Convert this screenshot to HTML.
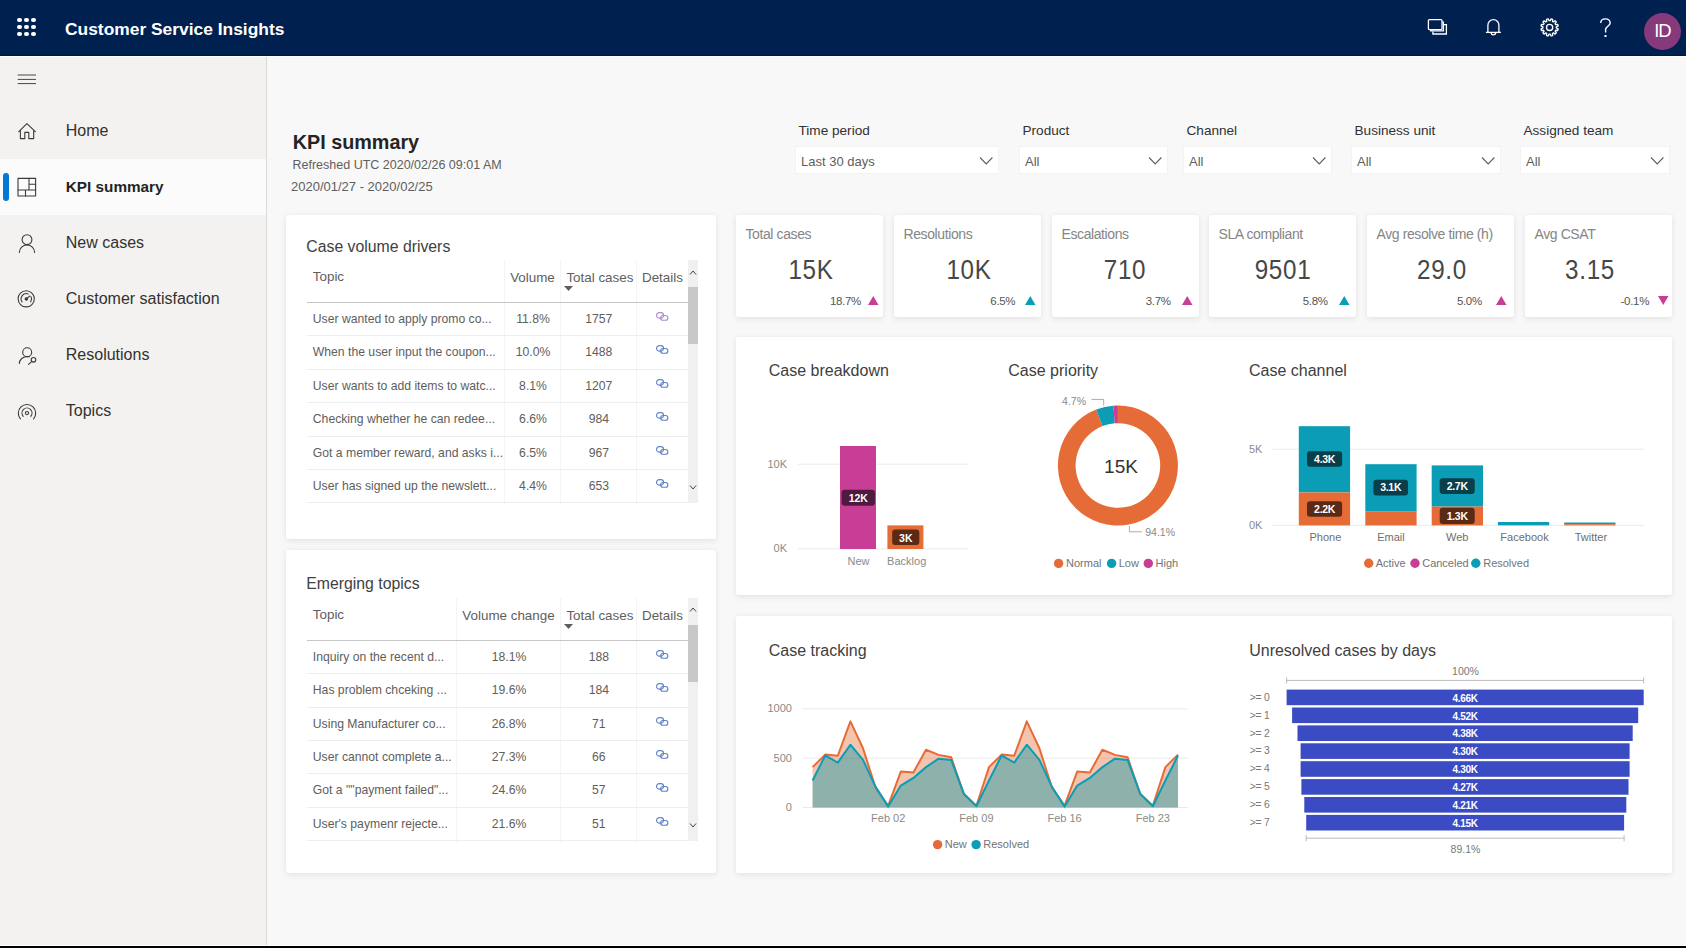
<!DOCTYPE html>
<html><head><meta charset="utf-8"><title>Customer Service Insights - KPI summary</title>
<style>
html,body{margin:0;padding:0;}
body{width:1686px;height:948px;position:relative;overflow:hidden;background:#f7f7f7;font-family:"Liberation Sans", sans-serif;}
.t{position:absolute;white-space:nowrap;line-height:1;}
</style></head><body>
<div style="position:absolute;left:0px;top:0px;width:1686px;height:56px;background:#002050"></div>
<div style="position:absolute;left:0px;top:55px;width:1686px;height:1px;background:#001545"></div>
<div style="position:absolute;left:0px;top:56px;width:1686px;height:1px;background:#ffffff"></div>
<div style="position:absolute;left:17.4px;top:17.8px;width:4.2px;height:4.2px;border-radius:50%;background:#fff"></div>
<div style="position:absolute;left:17.4px;top:24.8px;width:4.2px;height:4.2px;border-radius:50%;background:#fff"></div>
<div style="position:absolute;left:17.4px;top:31.8px;width:4.2px;height:4.2px;border-radius:50%;background:#fff"></div>
<div style="position:absolute;left:24.4px;top:17.8px;width:4.2px;height:4.2px;border-radius:50%;background:#fff"></div>
<div style="position:absolute;left:24.4px;top:24.8px;width:4.2px;height:4.2px;border-radius:50%;background:#fff"></div>
<div style="position:absolute;left:24.4px;top:31.8px;width:4.2px;height:4.2px;border-radius:50%;background:#fff"></div>
<div style="position:absolute;left:31.4px;top:17.8px;width:4.2px;height:4.2px;border-radius:50%;background:#fff"></div>
<div style="position:absolute;left:31.4px;top:24.8px;width:4.2px;height:4.2px;border-radius:50%;background:#fff"></div>
<div style="position:absolute;left:31.4px;top:31.8px;width:4.2px;height:4.2px;border-radius:50%;background:#fff"></div>
<div class="t" style="left:65.00px;top:20.76px;font-size:17.4px;font-weight:700;color:#ffffff;">Customer Service Insights</div>
<svg style="position:absolute;left:0;top:0" width="1686" height="56">
<g fill="none" stroke="#ffffff" stroke-width="1.3">
 <rect x="1428.4" y="19.6" width="13.6" height="10" rx="1"/>
 <path d="M1442.4 22.2 H1443.4 V30.9 H1430.7 V29.8"/>
 <path d="M1443.9 24.6 H1446.4 V34 H1432.9 V31.4"/>
 <path d="M1487.9 32.3 V25.2 A5.5 5.5 0 0 1 1498.9 25.2 V32.3"/>
 <path d="M1485.9 32.4 H1500.9"/>
 <path d="M1491.1 32.5 A2.3 2.3 0 0 0 1495.7 32.5"/>
 <circle cx="1549.6" cy="27.4" r="3.1"/>
 <path d="M1550.16 20.72 L1551.01 18.81 L1552.68 19.26 L1552.45 21.34 L1553.42 21.90 L1555.11 20.67 L1556.33 21.89 L1555.10 23.58 L1555.66 24.55 L1557.74 24.32 L1558.19 25.99 L1556.28 26.84 L1556.28 27.96 L1558.19 28.81 L1557.74 30.48 L1555.66 30.25 L1555.10 31.22 L1556.33 32.91 L1555.11 34.13 L1553.42 32.90 L1552.45 33.46 L1552.68 35.54 L1551.01 35.99 L1550.16 34.08 L1549.04 34.08 L1548.19 35.99 L1546.52 35.54 L1546.75 33.46 L1545.78 32.90 L1544.09 34.13 L1542.87 32.91 L1544.10 31.22 L1543.54 30.25 L1541.46 30.48 L1541.01 28.81 L1542.92 27.96 L1542.92 26.84 L1541.01 25.99 L1541.46 24.32 L1543.54 24.55 L1544.10 23.58 L1542.87 21.89 L1544.09 20.67 L1545.78 21.90 L1546.75 21.34 L1546.52 19.26 L1548.19 18.81 L1549.04 20.72 Z" stroke-linejoin="round"/>
</g>
</svg>
<svg style="position:absolute;left:0;top:0" width="1686" height="56"><path d="M1600.7 23 C1600.7 20.4 1602.8 18.9 1605.5 18.9 C1608.2 18.9 1610.2 20.7 1610.2 23.1 C1610.2 25.7 1605.6 26.4 1605.6 29.6 V32.5" fill="none" stroke="#ffffff" stroke-width="1.4"/><rect x="1604.5" y="35" width="2" height="2" fill="#fff"/></svg>
<div style="position:absolute;left:1643.8px;top:12.6px;width:37px;height:37px;border-radius:50%;background:#863a7b"></div>
<div class="t" style="left:1362.40px;width:600px;text-align:center;top:22.03px;font-size:18.5px;font-weight:400;color:#ffffff;letter-spacing:-1px;">ID</div>
<div style="position:absolute;left:0px;top:57px;width:266px;height:889px;background:#f3f2f1"></div>
<div style="position:absolute;left:266px;top:57px;width:1px;height:889px;background:#d8d8d8"></div>
<div style="position:absolute;left:0px;top:159px;width:266px;height:56px;background:#fbfbfb"></div>
<div style="position:absolute;left:3px;top:173px;width:6px;height:28px;background:#0078d4;border-radius:3px"></div>
<svg style="position:absolute;left:0;top:56px" width="266" height="400">
<g fill="none" stroke="#605e5c" stroke-width="1">
 <path d="M17.7 19 H36 M17.7 23.4 H36 M17.7 27.6 H36" stroke="#484644"/>
</g>
</svg>
<div class="t" style="left:65.80px;top:123.22px;font-size:16px;font-weight:400;color:#323130;">Home</div>
<div class="t" style="left:65.80px;top:179.30px;font-size:15.3px;font-weight:700;color:#252423;">KPI summary</div>
<div class="t" style="left:65.80px;top:235.22px;font-size:16px;font-weight:400;color:#323130;">New cases</div>
<div class="t" style="left:65.80px;top:291.22px;font-size:16px;font-weight:400;color:#323130;">Customer satisfaction</div>
<div class="t" style="left:65.80px;top:347.22px;font-size:16px;font-weight:400;color:#323130;">Resolutions</div>
<div class="t" style="left:65.80px;top:403.22px;font-size:16px;font-weight:400;color:#323130;">Topics</div>
<svg style="position:absolute;left:0;top:0" width="60" height="440">
<g fill="none" stroke="#3b3a39" stroke-width="1.1" stroke-linejoin="round" stroke-linecap="round">
 <path d="M18.8 131.6 L26.9 123.7 L35.3 131.6 M20.4 130 V138.6 H24.8 V132.4 H28.8 V138.6 H33.7 V130"/>
 <rect x="18" y="178.4" width="17.6" height="17.6"/>
 <path d="M29 178.4 V190 M18 190 H35.6 M29 184.3 H35.6 M25.5 190 V196"/>
 <circle cx="27" cy="239.7" r="4.9"/>
 <path d="M19.4 252.4 A7.6 7.4 0 0 1 34.6 252.4"/>
 <circle cx="26.2" cy="298.8" r="8.1"/>
 <path d="M22.1 301.9 A5.2 5.2 0 0 1 28.2 294 M31.1 296.7 A5.2 5.2 0 0 1 30.7 301.9 M26.3 298.9 L29.9 296"/>
 <circle cx="26.3" cy="298.9" r="1.2" fill="#3b3a39"/>
 <circle cx="27.2" cy="352.2" r="4.5"/>
 <path d="M19.3 363.4 A7.8 7.2 0 0 1 26.5 356.6 H29.5"/>
 <circle cx="33.5" cy="359.8" r="2.3"/>
 <path d="M31.3 361.8 L28.6 364.4"/>
 <path d="M20.4 418.8 A8.7 8.7 0 1 1 33.6 418.8"/>
 <path d="M23.2 416.3 A5 5 0 1 1 30.8 416.3"/>
 <circle cx="27" cy="413.1" r="1.6"/>
</g>
</svg>
<div style="position:absolute;left:267px;top:57px;width:1419px;height:889px;background:#f8f8f8"></div>
<div style="position:absolute;left:0px;top:945px;width:1686px;height:1px;background:#fff"></div>
<div style="position:absolute;left:0px;top:946px;width:1686px;height:2px;background:#000"></div>
<div class="t" style="left:292.70px;top:132.77px;font-size:19.8px;font-weight:700;color:#252423;">KPI summary</div>
<div class="t" style="left:292.50px;top:158.63px;font-size:12.5px;font-weight:400;color:#605e5c;">Refreshed UTC 2020/02/26 09:01 AM</div>
<div class="t" style="left:291.00px;top:180.37px;font-size:13px;font-weight:400;color:#605e5c;">2020/01/27 - 2020/02/25</div>
<div class="t" style="left:798.50px;top:124.40px;font-size:13.6px;font-weight:400;color:#323130;">Time period</div>
<div style="position:absolute;left:796px;top:147px;width:202px;height:26px;background:#fff;box-shadow:0 0 1px rgba(0,0,0,0.12)"></div>
<div class="t" style="left:801.00px;top:155.07px;font-size:13px;font-weight:400;color:#605e5c;">Last 30 days</div>
<svg style="position:absolute;left:979px;top:156px" width="16" height="11"><path d="M1 1.5 L7.2 8 L13.4 1.5" fill="none" stroke="#605e5c" stroke-width="1.1"/></svg>
<div class="t" style="left:1022.50px;top:124.40px;font-size:13.6px;font-weight:400;color:#323130;">Product</div>
<div style="position:absolute;left:1020px;top:147px;width:147px;height:26px;background:#fff;box-shadow:0 0 1px rgba(0,0,0,0.12)"></div>
<div class="t" style="left:1025.00px;top:155.07px;font-size:13px;font-weight:400;color:#605e5c;">All</div>
<svg style="position:absolute;left:1148px;top:156px" width="16" height="11"><path d="M1 1.5 L7.2 8 L13.4 1.5" fill="none" stroke="#605e5c" stroke-width="1.1"/></svg>
<div class="t" style="left:1186.50px;top:124.40px;font-size:13.6px;font-weight:400;color:#323130;">Channel</div>
<div style="position:absolute;left:1184px;top:147px;width:147px;height:26px;background:#fff;box-shadow:0 0 1px rgba(0,0,0,0.12)"></div>
<div class="t" style="left:1189.00px;top:155.07px;font-size:13px;font-weight:400;color:#605e5c;">All</div>
<svg style="position:absolute;left:1312px;top:156px" width="16" height="11"><path d="M1 1.5 L7.2 8 L13.4 1.5" fill="none" stroke="#605e5c" stroke-width="1.1"/></svg>
<div class="t" style="left:1354.50px;top:124.40px;font-size:13.6px;font-weight:400;color:#323130;">Business unit</div>
<div style="position:absolute;left:1352px;top:147px;width:148px;height:26px;background:#fff;box-shadow:0 0 1px rgba(0,0,0,0.12)"></div>
<div class="t" style="left:1357.00px;top:155.07px;font-size:13px;font-weight:400;color:#605e5c;">All</div>
<svg style="position:absolute;left:1481px;top:156px" width="16" height="11"><path d="M1 1.5 L7.2 8 L13.4 1.5" fill="none" stroke="#605e5c" stroke-width="1.1"/></svg>
<div class="t" style="left:1523.50px;top:124.40px;font-size:13.6px;font-weight:400;color:#323130;">Assigned team</div>
<div style="position:absolute;left:1521px;top:147px;width:148px;height:26px;background:#fff;box-shadow:0 0 1px rgba(0,0,0,0.12)"></div>
<div class="t" style="left:1526.00px;top:155.07px;font-size:13px;font-weight:400;color:#605e5c;">All</div>
<svg style="position:absolute;left:1650px;top:156px" width="16" height="11"><path d="M1 1.5 L7.2 8 L13.4 1.5" fill="none" stroke="#605e5c" stroke-width="1.1"/></svg>
<div style="position:absolute;left:286px;top:215px;width:430px;height:324px;background:#fff;border-radius:2px;box-shadow:0 1.5px 6px rgba(0,0,0,0.085),0 0 1px rgba(0,0,0,0.05)"></div>
<div style="position:absolute;left:286px;top:550px;width:430px;height:323px;background:#fff;border-radius:2px;box-shadow:0 1.5px 6px rgba(0,0,0,0.085),0 0 1px rgba(0,0,0,0.05)"></div>
<div style="position:absolute;left:736px;top:215px;width:147px;height:102px;background:#fff;border-radius:2px;box-shadow:0 1.5px 6px rgba(0,0,0,0.085),0 0 1px rgba(0,0,0,0.05)"></div>
<div style="position:absolute;left:894px;top:215px;width:147px;height:102px;background:#fff;border-radius:2px;box-shadow:0 1.5px 6px rgba(0,0,0,0.085),0 0 1px rgba(0,0,0,0.05)"></div>
<div style="position:absolute;left:1052px;top:215px;width:147px;height:102px;background:#fff;border-radius:2px;box-shadow:0 1.5px 6px rgba(0,0,0,0.085),0 0 1px rgba(0,0,0,0.05)"></div>
<div style="position:absolute;left:1209px;top:215px;width:147px;height:102px;background:#fff;border-radius:2px;box-shadow:0 1.5px 6px rgba(0,0,0,0.085),0 0 1px rgba(0,0,0,0.05)"></div>
<div style="position:absolute;left:1367px;top:215px;width:147px;height:102px;background:#fff;border-radius:2px;box-shadow:0 1.5px 6px rgba(0,0,0,0.085),0 0 1px rgba(0,0,0,0.05)"></div>
<div style="position:absolute;left:1525px;top:215px;width:147px;height:102px;background:#fff;border-radius:2px;box-shadow:0 1.5px 6px rgba(0,0,0,0.085),0 0 1px rgba(0,0,0,0.05)"></div>
<div style="position:absolute;left:736px;top:337px;width:936px;height:258px;background:#fff;border-radius:2px;box-shadow:0 1.5px 6px rgba(0,0,0,0.085),0 0 1px rgba(0,0,0,0.05)"></div>
<div style="position:absolute;left:736px;top:616px;width:936px;height:257px;background:#fff;border-radius:2px;box-shadow:0 1.5px 6px rgba(0,0,0,0.085),0 0 1px rgba(0,0,0,0.05)"></div>
<div class="t" style="left:306.30px;top:238.94px;font-size:15.8px;font-weight:400;color:#404040;">Case volume drivers</div>
<div style="position:absolute;left:504px;top:260px;width:1px;height:245px;background:#f4f4f4"></div>
<div style="position:absolute;left:560px;top:260px;width:1px;height:245px;background:#f4f4f4"></div>
<div style="position:absolute;left:636px;top:260px;width:1px;height:245px;background:#f4f4f4"></div>
<div class="t" style="left:312.80px;top:270.43px;font-size:13.4px;font-weight:400;color:#605e5c;">Topic</div>
<div class="t" style="left:232.50px;width:600px;text-align:center;top:270.73px;font-size:13.4px;font-weight:400;color:#605e5c;">Volume</div>
<div class="t" style="left:566.40px;top:270.73px;font-size:13.4px;font-weight:400;color:#605e5c;">Total cases</div>
<div class="t" style="left:642.00px;top:270.73px;font-size:13.4px;font-weight:400;color:#605e5c;">Details</div>
<svg style="position:absolute;left:564px;top:286px" width="10" height="6"><path d="M0 0 H9 L4.5 5 Z" fill="#605e5c"/></svg>
<div style="position:absolute;left:307px;top:302px;width:381px;height:1px;background:#c6c6c6"></div>
<div class="t" style="left:312.80px;top:312.97px;font-size:12.2px;font-weight:400;color:#605e5c;">User wanted to apply promo co...</div>
<div class="t" style="left:233.00px;width:600px;text-align:center;top:312.97px;font-size:12.2px;font-weight:400;color:#605e5c;">11.8%</div>
<div class="t" style="left:298.80px;width:600px;text-align:center;top:312.97px;font-size:12.2px;font-weight:400;color:#605e5c;">1757</div>
<svg style="position:absolute;left:655px;top:311.00px" width="15" height="11"><g fill="none" stroke="#ae8bd3" stroke-width="1.1"><rect x="1.55" y="1.65" width="7" height="5.5" rx="2.75"/><rect x="5.65" y="4.55" width="7.2" height="4.7" rx="2.35"/></g></svg>
<div style="position:absolute;left:307px;top:335px;width:381px;height:1px;background:#eeeeee"></div>
<div class="t" style="left:312.80px;top:346.37px;font-size:12.2px;font-weight:400;color:#605e5c;">When the user input the coupon...</div>
<div class="t" style="left:233.00px;width:600px;text-align:center;top:346.37px;font-size:12.2px;font-weight:400;color:#605e5c;">10.0%</div>
<div class="t" style="left:298.80px;width:600px;text-align:center;top:346.37px;font-size:12.2px;font-weight:400;color:#605e5c;">1488</div>
<svg style="position:absolute;left:655px;top:344.40px" width="15" height="11"><g fill="none" stroke="#6282c8" stroke-width="1.1"><rect x="1.55" y="1.65" width="7" height="5.5" rx="2.75"/><rect x="5.65" y="4.55" width="7.2" height="4.7" rx="2.35"/></g></svg>
<div style="position:absolute;left:307px;top:369px;width:381px;height:1px;background:#eeeeee"></div>
<div class="t" style="left:312.80px;top:379.77px;font-size:12.2px;font-weight:400;color:#605e5c;">User wants to add items to watc...</div>
<div class="t" style="left:233.00px;width:600px;text-align:center;top:379.77px;font-size:12.2px;font-weight:400;color:#605e5c;">8.1%</div>
<div class="t" style="left:298.80px;width:600px;text-align:center;top:379.77px;font-size:12.2px;font-weight:400;color:#605e5c;">1207</div>
<svg style="position:absolute;left:655px;top:377.80px" width="15" height="11"><g fill="none" stroke="#6282c8" stroke-width="1.1"><rect x="1.55" y="1.65" width="7" height="5.5" rx="2.75"/><rect x="5.65" y="4.55" width="7.2" height="4.7" rx="2.35"/></g></svg>
<div style="position:absolute;left:307px;top:402px;width:381px;height:1px;background:#eeeeee"></div>
<div class="t" style="left:312.80px;top:413.17px;font-size:12.2px;font-weight:400;color:#605e5c;">Checking whether he can redee...</div>
<div class="t" style="left:233.00px;width:600px;text-align:center;top:413.17px;font-size:12.2px;font-weight:400;color:#605e5c;">6.6%</div>
<div class="t" style="left:298.80px;width:600px;text-align:center;top:413.17px;font-size:12.2px;font-weight:400;color:#605e5c;">984</div>
<svg style="position:absolute;left:655px;top:411.20px" width="15" height="11"><g fill="none" stroke="#6282c8" stroke-width="1.1"><rect x="1.55" y="1.65" width="7" height="5.5" rx="2.75"/><rect x="5.65" y="4.55" width="7.2" height="4.7" rx="2.35"/></g></svg>
<div style="position:absolute;left:307px;top:436px;width:381px;height:1px;background:#eeeeee"></div>
<div class="t" style="left:312.80px;top:446.57px;font-size:12.2px;font-weight:400;color:#605e5c;">Got a member reward, and asks i...</div>
<div class="t" style="left:233.00px;width:600px;text-align:center;top:446.57px;font-size:12.2px;font-weight:400;color:#605e5c;">6.5%</div>
<div class="t" style="left:298.80px;width:600px;text-align:center;top:446.57px;font-size:12.2px;font-weight:400;color:#605e5c;">967</div>
<svg style="position:absolute;left:655px;top:444.60px" width="15" height="11"><g fill="none" stroke="#6282c8" stroke-width="1.1"><rect x="1.55" y="1.65" width="7" height="5.5" rx="2.75"/><rect x="5.65" y="4.55" width="7.2" height="4.7" rx="2.35"/></g></svg>
<div style="position:absolute;left:307px;top:469px;width:381px;height:1px;background:#eeeeee"></div>
<div class="t" style="left:312.80px;top:479.97px;font-size:12.2px;font-weight:400;color:#605e5c;">User has signed up the newslett...</div>
<div class="t" style="left:233.00px;width:600px;text-align:center;top:479.97px;font-size:12.2px;font-weight:400;color:#605e5c;">4.4%</div>
<div class="t" style="left:298.80px;width:600px;text-align:center;top:479.97px;font-size:12.2px;font-weight:400;color:#605e5c;">653</div>
<svg style="position:absolute;left:655px;top:478.00px" width="15" height="11"><g fill="none" stroke="#6282c8" stroke-width="1.1"><rect x="1.55" y="1.65" width="7" height="5.5" rx="2.75"/><rect x="5.65" y="4.55" width="7.2" height="4.7" rx="2.35"/></g></svg>
<div style="position:absolute;left:307px;top:502px;width:381px;height:1px;background:#eeeeee"></div>
<div style="position:absolute;left:688px;top:260px;width:10px;height:243px;background:#f0f0f0"></div>
<div style="position:absolute;left:688px;top:287px;width:10px;height:57px;background:#c8c8c8"></div>
<svg style="position:absolute;left:689px;top:268.5px" width="8" height="8"><path d="M1 5.5 L4 2 L7 5.5" fill="none" stroke="#444" stroke-width="1"/></svg>
<svg style="position:absolute;left:689px;top:483px" width="8" height="8"><path d="M1 2.5 L4 6 L7 2.5" fill="none" stroke="#444" stroke-width="1"/></svg>
<div class="t" style="left:306.30px;top:575.94px;font-size:15.8px;font-weight:400;color:#404040;">Emerging topics</div>
<div style="position:absolute;left:456px;top:597.8px;width:1px;height:245px;background:#f4f4f4"></div>
<div style="position:absolute;left:560px;top:597.8px;width:1px;height:245px;background:#f4f4f4"></div>
<div style="position:absolute;left:636px;top:597.8px;width:1px;height:245px;background:#f4f4f4"></div>
<div class="t" style="left:312.80px;top:608.23px;font-size:13.4px;font-weight:400;color:#605e5c;">Topic</div>
<div class="t" style="left:208.50px;width:600px;text-align:center;top:608.53px;font-size:13.4px;font-weight:400;color:#605e5c;">Volume change</div>
<div class="t" style="left:566.40px;top:608.53px;font-size:13.4px;font-weight:400;color:#605e5c;">Total cases</div>
<div class="t" style="left:642.00px;top:608.53px;font-size:13.4px;font-weight:400;color:#605e5c;">Details</div>
<svg style="position:absolute;left:564px;top:623.8px" width="10" height="6"><path d="M0 0 H9 L4.5 5 Z" fill="#605e5c"/></svg>
<div style="position:absolute;left:307px;top:639.8px;width:381px;height:1px;background:#c6c6c6"></div>
<div class="t" style="left:312.80px;top:650.77px;font-size:12.2px;font-weight:400;color:#605e5c;">Inquiry on the recent d...</div>
<div class="t" style="left:209.00px;width:600px;text-align:center;top:650.77px;font-size:12.2px;font-weight:400;color:#605e5c;">18.1%</div>
<div class="t" style="left:298.80px;width:600px;text-align:center;top:650.77px;font-size:12.2px;font-weight:400;color:#605e5c;">188</div>
<svg style="position:absolute;left:655px;top:648.80px" width="15" height="11"><g fill="none" stroke="#6282c8" stroke-width="1.1"><rect x="1.55" y="1.65" width="7" height="5.5" rx="2.75"/><rect x="5.65" y="4.55" width="7.2" height="4.7" rx="2.35"/></g></svg>
<div style="position:absolute;left:307px;top:673px;width:381px;height:1px;background:#eeeeee"></div>
<div class="t" style="left:312.80px;top:684.17px;font-size:12.2px;font-weight:400;color:#605e5c;">Has problem chceking ...</div>
<div class="t" style="left:209.00px;width:600px;text-align:center;top:684.17px;font-size:12.2px;font-weight:400;color:#605e5c;">19.6%</div>
<div class="t" style="left:298.80px;width:600px;text-align:center;top:684.17px;font-size:12.2px;font-weight:400;color:#605e5c;">184</div>
<svg style="position:absolute;left:655px;top:682.20px" width="15" height="11"><g fill="none" stroke="#6282c8" stroke-width="1.1"><rect x="1.55" y="1.65" width="7" height="5.5" rx="2.75"/><rect x="5.65" y="4.55" width="7.2" height="4.7" rx="2.35"/></g></svg>
<div style="position:absolute;left:307px;top:707px;width:381px;height:1px;background:#eeeeee"></div>
<div class="t" style="left:312.80px;top:717.57px;font-size:12.2px;font-weight:400;color:#605e5c;">Using Manufacturer co...</div>
<div class="t" style="left:209.00px;width:600px;text-align:center;top:717.57px;font-size:12.2px;font-weight:400;color:#605e5c;">26.8%</div>
<div class="t" style="left:298.80px;width:600px;text-align:center;top:717.57px;font-size:12.2px;font-weight:400;color:#605e5c;">71</div>
<svg style="position:absolute;left:655px;top:715.60px" width="15" height="11"><g fill="none" stroke="#6282c8" stroke-width="1.1"><rect x="1.55" y="1.65" width="7" height="5.5" rx="2.75"/><rect x="5.65" y="4.55" width="7.2" height="4.7" rx="2.35"/></g></svg>
<div style="position:absolute;left:307px;top:740px;width:381px;height:1px;background:#eeeeee"></div>
<div class="t" style="left:312.80px;top:750.97px;font-size:12.2px;font-weight:400;color:#605e5c;">User cannot complete a...</div>
<div class="t" style="left:209.00px;width:600px;text-align:center;top:750.97px;font-size:12.2px;font-weight:400;color:#605e5c;">27.3%</div>
<div class="t" style="left:298.80px;width:600px;text-align:center;top:750.97px;font-size:12.2px;font-weight:400;color:#605e5c;">66</div>
<svg style="position:absolute;left:655px;top:749.00px" width="15" height="11"><g fill="none" stroke="#6282c8" stroke-width="1.1"><rect x="1.55" y="1.65" width="7" height="5.5" rx="2.75"/><rect x="5.65" y="4.55" width="7.2" height="4.7" rx="2.35"/></g></svg>
<div style="position:absolute;left:307px;top:773px;width:381px;height:1px;background:#eeeeee"></div>
<div class="t" style="left:312.80px;top:784.37px;font-size:12.2px;font-weight:400;color:#605e5c;">Got a ""payment failed"...</div>
<div class="t" style="left:209.00px;width:600px;text-align:center;top:784.37px;font-size:12.2px;font-weight:400;color:#605e5c;">24.6%</div>
<div class="t" style="left:298.80px;width:600px;text-align:center;top:784.37px;font-size:12.2px;font-weight:400;color:#605e5c;">57</div>
<svg style="position:absolute;left:655px;top:782.40px" width="15" height="11"><g fill="none" stroke="#6282c8" stroke-width="1.1"><rect x="1.55" y="1.65" width="7" height="5.5" rx="2.75"/><rect x="5.65" y="4.55" width="7.2" height="4.7" rx="2.35"/></g></svg>
<div style="position:absolute;left:307px;top:807px;width:381px;height:1px;background:#eeeeee"></div>
<div class="t" style="left:312.80px;top:817.77px;font-size:12.2px;font-weight:400;color:#605e5c;">User's paymenr rejecte...</div>
<div class="t" style="left:209.00px;width:600px;text-align:center;top:817.77px;font-size:12.2px;font-weight:400;color:#605e5c;">21.6%</div>
<div class="t" style="left:298.80px;width:600px;text-align:center;top:817.77px;font-size:12.2px;font-weight:400;color:#605e5c;">51</div>
<svg style="position:absolute;left:655px;top:815.80px" width="15" height="11"><g fill="none" stroke="#6282c8" stroke-width="1.1"><rect x="1.55" y="1.65" width="7" height="5.5" rx="2.75"/><rect x="5.65" y="4.55" width="7.2" height="4.7" rx="2.35"/></g></svg>
<div style="position:absolute;left:307px;top:840px;width:381px;height:1px;background:#eeeeee"></div>
<div style="position:absolute;left:688px;top:597.8px;width:10px;height:243px;background:#f0f0f0"></div>
<div style="position:absolute;left:688px;top:624.8px;width:10px;height:57px;background:#c8c8c8"></div>
<svg style="position:absolute;left:689px;top:606.3px" width="8" height="8"><path d="M1 5.5 L4 2 L7 5.5" fill="none" stroke="#444" stroke-width="1"/></svg>
<svg style="position:absolute;left:689px;top:820.8px" width="8" height="8"><path d="M1 2.5 L4 6 L7 2.5" fill="none" stroke="#444" stroke-width="1"/></svg>
<div class="t" style="left:745.50px;top:227.35px;font-size:14px;font-weight:400;color:#858585;letter-spacing:-0.4px;">Total cases</div>
<div class="t" style="left:511.20px;width:600px;text-align:center;top:255.83px;font-size:27.8px;font-weight:400;color:#474747;letter-spacing:0.8px;transform:scaleX(0.87);">15K</div>
<div class="t" style="left:261.00px;width:600px;text-align:right;top:295.65px;font-size:11.5px;font-weight:400;color:#555555;letter-spacing:-0.3px;">18.7%</div>
<svg style="position:absolute;left:868px;top:296.4px" width="11" height="9"><path d="M5.25 0 L10.5 9 H0 Z" fill="#c83d95"/></svg>
<div class="t" style="left:903.50px;top:227.35px;font-size:14px;font-weight:400;color:#858585;letter-spacing:-0.4px;">Resolutions</div>
<div class="t" style="left:669.10px;width:600px;text-align:center;top:255.83px;font-size:27.8px;font-weight:400;color:#474747;letter-spacing:0.8px;transform:scaleX(0.87);">10K</div>
<div class="t" style="left:415.30px;width:600px;text-align:right;top:295.65px;font-size:11.5px;font-weight:400;color:#555555;letter-spacing:-0.3px;">6.5%</div>
<svg style="position:absolute;left:1024.7px;top:296.4px" width="11" height="9"><path d="M5.25 0 L10.5 9 H0 Z" fill="#0a9db5"/></svg>
<div class="t" style="left:1061.50px;top:227.35px;font-size:14px;font-weight:400;color:#858585;letter-spacing:-0.4px;">Escalations</div>
<div class="t" style="left:825.30px;width:600px;text-align:center;top:255.83px;font-size:27.8px;font-weight:400;color:#474747;letter-spacing:0.8px;transform:scaleX(0.87);">710</div>
<div class="t" style="left:570.70px;width:600px;text-align:right;top:295.65px;font-size:11.5px;font-weight:400;color:#555555;letter-spacing:-0.3px;">3.7%</div>
<svg style="position:absolute;left:1182px;top:296.4px" width="11" height="9"><path d="M5.25 0 L10.5 9 H0 Z" fill="#c83d95"/></svg>
<div class="t" style="left:1218.50px;top:227.35px;font-size:14px;font-weight:400;color:#858585;letter-spacing:-0.4px;">SLA compliant</div>
<div class="t" style="left:982.90px;width:600px;text-align:center;top:255.83px;font-size:27.8px;font-weight:400;color:#474747;letter-spacing:0.8px;transform:scaleX(0.87);">9501</div>
<div class="t" style="left:727.70px;width:600px;text-align:right;top:295.65px;font-size:11.5px;font-weight:400;color:#555555;letter-spacing:-0.3px;">5.8%</div>
<svg style="position:absolute;left:1339.2px;top:296.4px" width="11" height="9"><path d="M5.25 0 L10.5 9 H0 Z" fill="#0a9db5"/></svg>
<div class="t" style="left:1376.50px;top:227.35px;font-size:14px;font-weight:400;color:#858585;letter-spacing:-0.4px;">Avg resolve time (h)</div>
<div class="t" style="left:1141.70px;width:600px;text-align:center;top:255.83px;font-size:27.8px;font-weight:400;color:#474747;letter-spacing:0.8px;transform:scaleX(0.87);">29.0</div>
<div class="t" style="left:881.90px;width:600px;text-align:right;top:295.65px;font-size:11.5px;font-weight:400;color:#555555;letter-spacing:-0.3px;">5.0%</div>
<svg style="position:absolute;left:1496px;top:296.4px" width="11" height="9"><path d="M5.25 0 L10.5 9 H0 Z" fill="#c83d95"/></svg>
<div class="t" style="left:1534.50px;top:227.35px;font-size:14px;font-weight:400;color:#858585;letter-spacing:-0.4px;">Avg CSAT</div>
<div class="t" style="left:1290.20px;width:600px;text-align:center;top:255.83px;font-size:27.8px;font-weight:400;color:#474747;letter-spacing:0.8px;transform:scaleX(0.87);">3.15</div>
<div class="t" style="left:1049.10px;width:600px;text-align:right;top:295.65px;font-size:11.5px;font-weight:400;color:#555555;letter-spacing:-0.3px;">-0.1%</div>
<svg style="position:absolute;left:1657.8px;top:296.4px" width="11" height="9"><path d="M0 0 H10.5 L5.25 9 Z" fill="#c83d95"/></svg>
<div class="t" style="left:768.80px;top:362.92px;font-size:16px;font-weight:400;color:#404040;">Case breakdown</div>
<div class="t" style="left:1008.30px;top:362.92px;font-size:16px;font-weight:400;color:#404040;">Case priority</div>
<div class="t" style="left:1249.00px;top:362.92px;font-size:16px;font-weight:400;color:#404040;">Case channel</div>
<svg style="position:absolute;left:0;top:0" width="1686" height="948"><line x1="797.7" y1="464.2" x2="968.6" y2="464.2" stroke="#eaeaea" stroke-width="1"/><line x1="797.7" y1="548.9" x2="968.6" y2="548.9" stroke="#eaeaea" stroke-width="1"/><rect x="840" y="446" width="36" height="103" fill="#c83d95"/><rect x="887.4" y="525.4" width="36" height="23.6" fill="#e66c37"/><rect x="841.6" y="489.8" width="33.3" height="15.9" rx="3" fill="#4e1a40"/><rect x="892.2" y="529.5" width="27.1" height="15.4" rx="3" fill="#5b2a14"/><path d="M1117.90 405.50 A60 60 0 1 1 1096.20 409.56 L1102.60 426.06 A42.3 42.3 0 1 0 1117.90 423.20 Z" fill="#e66c37"/><path d="M1096.20 409.56 A60 60 0 0 1 1113.40 405.67 L1114.73 423.32 A42.3 42.3 0 0 0 1102.60 426.06 Z" fill="#0a9db5"/><path d="M1113.40 405.67 A60 60 0 0 1 1117.90 405.50 L1117.90 423.20 A42.3 42.3 0 0 0 1114.73 423.32 Z" fill="#c83d95"/><path d="M1091.4 399.4 H1103.7 V405.6" fill="none" stroke="#aaaaaa" stroke-width="1"/><path d="M1129.4 526 V531.8 H1142" fill="none" stroke="#aaaaaa" stroke-width="1"/><circle cx="1058.6" cy="563.4" r="4.7" fill="#e66c37"/><circle cx="1111.6" cy="563.4" r="4.7" fill="#0a9db5"/><circle cx="1148.3" cy="563.4" r="4.7" fill="#c83d95"/><line x1="1272.6" y1="449.2" x2="1643.6" y2="449.2" stroke="#eaeaea" stroke-width="1"/><line x1="1272.6" y1="525.4" x2="1643.6" y2="525.4" stroke="#eaeaea" stroke-width="1"/><rect x="1298.8" y="426.2" width="51.3" height="66.20" fill="#0a9db5"/><rect x="1298.8" y="492.4" width="51.3" height="33.00" fill="#e66c37"/><rect x="1365.3" y="464.2" width="51.3" height="47.00" fill="#0a9db5"/><rect x="1365.3" y="511.2" width="51.3" height="14.20" fill="#e66c37"/><rect x="1431.7" y="465.4" width="51.3" height="41.20" fill="#0a9db5"/><rect x="1431.7" y="506.6" width="51.3" height="18.80" fill="#e66c37"/><rect x="1497.9" y="522.0" width="51.3" height="3.00" fill="#0a9db5"/><rect x="1497.9" y="525.0" width="51.3" height="0.40" fill="#e66c37"/><rect x="1564.2" y="522.5" width="51.3" height="1.70" fill="#0a9db5"/><rect x="1564.2" y="524.2" width="51.3" height="1.20" fill="#e66c37"/><rect x="1307" y="451.3" width="35.1" height="15.5" rx="3" fill="#093f4b"/><rect x="1307" y="501.2" width="35.1" height="15.5" rx="3" fill="#5b2a14"/><rect x="1373.4" y="479.7" width="34.6" height="15.8" rx="3" fill="#093f4b"/><rect x="1439.7" y="478.2" width="35" height="15.8" rx="3" fill="#093f4b"/><rect x="1439.7" y="507.8" width="35" height="16.2" rx="3" fill="#5b2a14"/><circle cx="1368.7" cy="563.3" r="4.7" fill="#e66c37"/><circle cx="1415" cy="563.3" r="4.7" fill="#c83d95"/><circle cx="1475.8" cy="563.3" r="4.7" fill="#0a9db5"/><line x1="803" y1="708.8" x2="1187.8" y2="708.8" stroke="#eaeaea" stroke-width="1"/><line x1="803" y1="758.2" x2="1187.8" y2="758.2" stroke="#eaeaea" stroke-width="1"/><line x1="803" y1="807.5" x2="1187.8" y2="807.5" stroke="#eaeaea" stroke-width="1"/><polygon points="812.60,767.13 825.20,754.60 837.80,755.78 850.40,721.33 863.00,748.28 875.60,787.76 888.20,805.72 900.80,771.57 913.40,772.46 926.00,749.76 938.60,754.89 951.20,757.26 963.80,794.08 976.40,805.72 989.00,767.13 1001.60,754.60 1014.20,755.78 1026.80,721.33 1039.40,748.28 1052.00,787.76 1064.60,805.72 1077.20,771.57 1089.80,772.46 1102.40,749.76 1115.00,754.89 1127.60,757.26 1140.20,794.08 1152.80,805.72 1165.40,767.13 1178.00,754.60 1178.00,807.50 812.60,807.50" fill="rgba(230,108,55,0.4)"/><polygon points="812.60,780.55 825.20,755.49 837.80,762.59 850.40,744.73 863.00,759.93 875.60,786.87 888.20,806.61 900.80,785.59 913.40,777.89 926.00,767.13 938.60,758.64 951.20,759.93 963.80,793.68 976.40,806.22 989.00,780.55 1001.60,755.49 1014.20,762.59 1026.80,744.73 1039.40,759.93 1052.00,786.87 1064.60,806.61 1077.20,785.59 1089.80,777.89 1102.40,767.13 1115.00,758.64 1127.60,759.93 1140.20,793.68 1152.80,806.22 1165.40,780.55 1178.00,755.49 1178.00,807.50 812.60,807.50" fill="rgba(0,150,170,0.42)"/><polyline points="812.60,767.13 825.20,754.60 837.80,755.78 850.40,721.33 863.00,748.28 875.60,787.76 888.20,805.72 900.80,771.57 913.40,772.46 926.00,749.76 938.60,754.89 951.20,757.26 963.80,794.08 976.40,805.72 989.00,767.13 1001.60,754.60 1014.20,755.78 1026.80,721.33 1039.40,748.28 1052.00,787.76 1064.60,805.72 1077.20,771.57 1089.80,772.46 1102.40,749.76 1115.00,754.89 1127.60,757.26 1140.20,794.08 1152.80,805.72 1165.40,767.13 1178.00,754.60" fill="none" stroke="#e66c37" stroke-width="2" stroke-linejoin="round"/><polyline points="812.60,780.55 825.20,755.49 837.80,762.59 850.40,744.73 863.00,759.93 875.60,786.87 888.20,806.61 900.80,785.59 913.40,777.89 926.00,767.13 938.60,758.64 951.20,759.93 963.80,793.68 976.40,806.22 989.00,780.55 1001.60,755.49 1014.20,762.59 1026.80,744.73 1039.40,759.93 1052.00,786.87 1064.60,806.61 1077.20,785.59 1089.80,777.89 1102.40,767.13 1115.00,758.64 1127.60,759.93 1140.20,793.68 1152.80,806.22 1165.40,780.55 1178.00,755.49" fill="none" stroke="#0a9db5" stroke-width="2" stroke-linejoin="round"/><circle cx="937.6" cy="844.6" r="4.7" fill="#e66c37"/><circle cx="976.1" cy="844.6" r="4.7" fill="#0a9db5"/><path d="M1286.6 680.4 H1643.7 M1286.6 677.4 V683.5 M1643.7 677.4 V683.5" stroke="#bbbbbb" stroke-width="1" fill="none"/><path d="M1306.2 838.2 H1624.1 M1306.2 835.2 V841.3 M1624.1 835.2 V841.3" stroke="#bbbbbb" stroke-width="1" fill="none"/><rect x="1286.6" y="689.60" width="357.10" height="15.6" fill="#3a4bc4"/><rect x="1292.1" y="707.50" width="346.10" height="15.6" fill="#3a4bc4"/><rect x="1297.5" y="725.40" width="335.20" height="15.6" fill="#3a4bc4"/><rect x="1300.6" y="743.30" width="329.00" height="15.6" fill="#3a4bc4"/><rect x="1300.6" y="761.20" width="329.00" height="15.6" fill="#3a4bc4"/><rect x="1301.4" y="779.10" width="327.10" height="15.6" fill="#3a4bc4"/><rect x="1304.3" y="797.00" width="322.00" height="15.6" fill="#3a4bc4"/><rect x="1306.2" y="814.90" width="317.90" height="15.6" fill="#3a4bc4"/></svg>
<div class="t" style="left:187.00px;width:600px;text-align:right;top:458.51px;font-size:11px;font-weight:400;color:#8a8a8a;">10K</div>
<div class="t" style="left:187.00px;width:600px;text-align:right;top:543.31px;font-size:11px;font-weight:400;color:#8a8a8a;">0K</div>
<div class="t" style="left:558.30px;width:600px;text-align:center;top:492.97px;font-size:10.5px;font-weight:700;color:#ffffff;">12K</div>
<div class="t" style="left:605.80px;width:600px;text-align:center;top:532.57px;font-size:10.5px;font-weight:700;color:#ffffff;">3K</div>
<div class="t" style="left:558.50px;width:600px;text-align:center;top:555.51px;font-size:11px;font-weight:400;color:#8a8a8a;">New</div>
<div class="t" style="left:606.70px;width:600px;text-align:center;top:555.51px;font-size:11px;font-weight:400;color:#8a8a8a;">Backlog</div>
<div class="t" style="left:486.00px;width:600px;text-align:right;top:396.07px;font-size:10.5px;font-weight:400;color:#888888;">4.7%</div>
<div class="t" style="left:575.00px;width:600px;text-align:right;top:526.57px;font-size:10.5px;font-weight:400;color:#888888;">94.1%</div>
<div class="t" style="left:821.00px;width:600px;text-align:center;top:457.17px;font-size:19px;font-weight:400;color:#333333;">15K</div>
<div class="t" style="left:1066.00px;top:558.01px;font-size:11px;font-weight:400;color:#737373;">Normal</div>
<div class="t" style="left:1118.70px;top:558.01px;font-size:11px;font-weight:400;color:#737373;">Low</div>
<div class="t" style="left:1155.50px;top:558.01px;font-size:11px;font-weight:400;color:#737373;">High</div>
<div class="t" style="left:662.40px;width:600px;text-align:right;top:443.71px;font-size:11px;font-weight:400;color:#8a8a8a;">5K</div>
<div class="t" style="left:662.40px;width:600px;text-align:right;top:519.91px;font-size:11px;font-weight:400;color:#8a8a8a;">0K</div>
<div class="t" style="left:1024.60px;width:600px;text-align:center;top:453.77px;font-size:10.5px;font-weight:700;color:#ffffff;letter-spacing:-0.3px;">4.3K</div>
<div class="t" style="left:1024.60px;width:600px;text-align:center;top:503.77px;font-size:10.5px;font-weight:700;color:#ffffff;letter-spacing:-0.3px;">2.2K</div>
<div class="t" style="left:1090.70px;width:600px;text-align:center;top:482.37px;font-size:10.5px;font-weight:700;color:#ffffff;letter-spacing:-0.3px;">3.1K</div>
<div class="t" style="left:1157.20px;width:600px;text-align:center;top:480.77px;font-size:10.5px;font-weight:700;color:#ffffff;letter-spacing:-0.3px;">2.7K</div>
<div class="t" style="left:1157.20px;width:600px;text-align:center;top:510.77px;font-size:10.5px;font-weight:700;color:#ffffff;letter-spacing:-0.3px;">1.3K</div>
<div class="t" style="left:1025.40px;width:600px;text-align:center;top:531.51px;font-size:11px;font-weight:400;color:#6e6e6e;">Phone</div>
<div class="t" style="left:1091.00px;width:600px;text-align:center;top:531.51px;font-size:11px;font-weight:400;color:#6e6e6e;">Email</div>
<div class="t" style="left:1157.20px;width:600px;text-align:center;top:531.51px;font-size:11px;font-weight:400;color:#6e6e6e;">Web</div>
<div class="t" style="left:1224.50px;width:600px;text-align:center;top:531.51px;font-size:11px;font-weight:400;color:#6e6e6e;">Facebook</div>
<div class="t" style="left:1290.90px;width:600px;text-align:center;top:531.51px;font-size:11px;font-weight:400;color:#6e6e6e;">Twitter</div>
<div class="t" style="left:1375.70px;top:557.91px;font-size:11px;font-weight:400;color:#737373;">Active</div>
<div class="t" style="left:1422.20px;top:557.91px;font-size:11px;font-weight:400;color:#737373;">Canceled</div>
<div class="t" style="left:1483.20px;top:557.91px;font-size:11px;font-weight:400;color:#737373;">Resolved</div>
<div class="t" style="left:768.80px;top:642.72px;font-size:16px;font-weight:400;color:#404040;">Case tracking</div>
<div class="t" style="left:1249.20px;top:643.12px;font-size:16px;font-weight:400;color:#404040;">Unresolved cases by days</div>
<div class="t" style="left:191.90px;width:600px;text-align:right;top:703.31px;font-size:11px;font-weight:400;color:#8a8a8a;">1000</div>
<div class="t" style="left:191.90px;width:600px;text-align:right;top:752.71px;font-size:11px;font-weight:400;color:#8a8a8a;">500</div>
<div class="t" style="left:191.90px;width:600px;text-align:right;top:802.01px;font-size:11px;font-weight:400;color:#8a8a8a;">0</div>
<div class="t" style="left:588.20px;width:600px;text-align:center;top:813.31px;font-size:11px;font-weight:400;color:#8a8a8a;">Feb 02</div>
<div class="t" style="left:676.40px;width:600px;text-align:center;top:813.31px;font-size:11px;font-weight:400;color:#8a8a8a;">Feb 09</div>
<div class="t" style="left:764.60px;width:600px;text-align:center;top:813.31px;font-size:11px;font-weight:400;color:#8a8a8a;">Feb 16</div>
<div class="t" style="left:852.80px;width:600px;text-align:center;top:813.31px;font-size:11px;font-weight:400;color:#8a8a8a;">Feb 23</div>
<div class="t" style="left:944.80px;top:839.11px;font-size:11px;font-weight:400;color:#737373;">New</div>
<div class="t" style="left:983.30px;top:839.11px;font-size:11px;font-weight:400;color:#737373;">Resolved</div>
<div class="t" style="left:1165.50px;width:600px;text-align:center;top:665.77px;font-size:10.5px;font-weight:400;color:#777777;">100%</div>
<div class="t" style="left:1165.50px;width:600px;text-align:center;top:843.97px;font-size:10.5px;font-weight:400;color:#777777;">89.1%</div>
<div class="t" style="left:1165.00px;width:600px;text-align:center;top:693.62px;font-size:10px;font-weight:700;color:#ffffff;letter-spacing:-0.3px;">4.66K</div>
<div class="t" style="left:1249.70px;top:692.79px;font-size:10.3px;font-weight:400;color:#777777;letter-spacing:-0.2px;">&gt;= 0</div>
<div class="t" style="left:1165.00px;width:600px;text-align:center;top:711.52px;font-size:10px;font-weight:700;color:#ffffff;letter-spacing:-0.3px;">4.52K</div>
<div class="t" style="left:1249.70px;top:710.69px;font-size:10.3px;font-weight:400;color:#777777;letter-spacing:-0.2px;">&gt;= 1</div>
<div class="t" style="left:1165.00px;width:600px;text-align:center;top:729.42px;font-size:10px;font-weight:700;color:#ffffff;letter-spacing:-0.3px;">4.38K</div>
<div class="t" style="left:1249.70px;top:728.59px;font-size:10.3px;font-weight:400;color:#777777;letter-spacing:-0.2px;">&gt;= 2</div>
<div class="t" style="left:1165.00px;width:600px;text-align:center;top:747.33px;font-size:10px;font-weight:700;color:#ffffff;letter-spacing:-0.3px;">4.30K</div>
<div class="t" style="left:1249.70px;top:746.49px;font-size:10.3px;font-weight:400;color:#777777;letter-spacing:-0.2px;">&gt;= 3</div>
<div class="t" style="left:1165.00px;width:600px;text-align:center;top:765.23px;font-size:10px;font-weight:700;color:#ffffff;letter-spacing:-0.3px;">4.30K</div>
<div class="t" style="left:1249.70px;top:764.39px;font-size:10.3px;font-weight:400;color:#777777;letter-spacing:-0.2px;">&gt;= 4</div>
<div class="t" style="left:1165.00px;width:600px;text-align:center;top:783.12px;font-size:10px;font-weight:700;color:#ffffff;letter-spacing:-0.3px;">4.27K</div>
<div class="t" style="left:1249.70px;top:782.29px;font-size:10.3px;font-weight:400;color:#777777;letter-spacing:-0.2px;">&gt;= 5</div>
<div class="t" style="left:1165.00px;width:600px;text-align:center;top:801.02px;font-size:10px;font-weight:700;color:#ffffff;letter-spacing:-0.3px;">4.21K</div>
<div class="t" style="left:1249.70px;top:800.19px;font-size:10.3px;font-weight:400;color:#777777;letter-spacing:-0.2px;">&gt;= 6</div>
<div class="t" style="left:1165.00px;width:600px;text-align:center;top:818.92px;font-size:10px;font-weight:700;color:#ffffff;letter-spacing:-0.3px;">4.15K</div>
<div class="t" style="left:1249.70px;top:818.09px;font-size:10.3px;font-weight:400;color:#777777;letter-spacing:-0.2px;">&gt;= 7</div>
</body></html>
